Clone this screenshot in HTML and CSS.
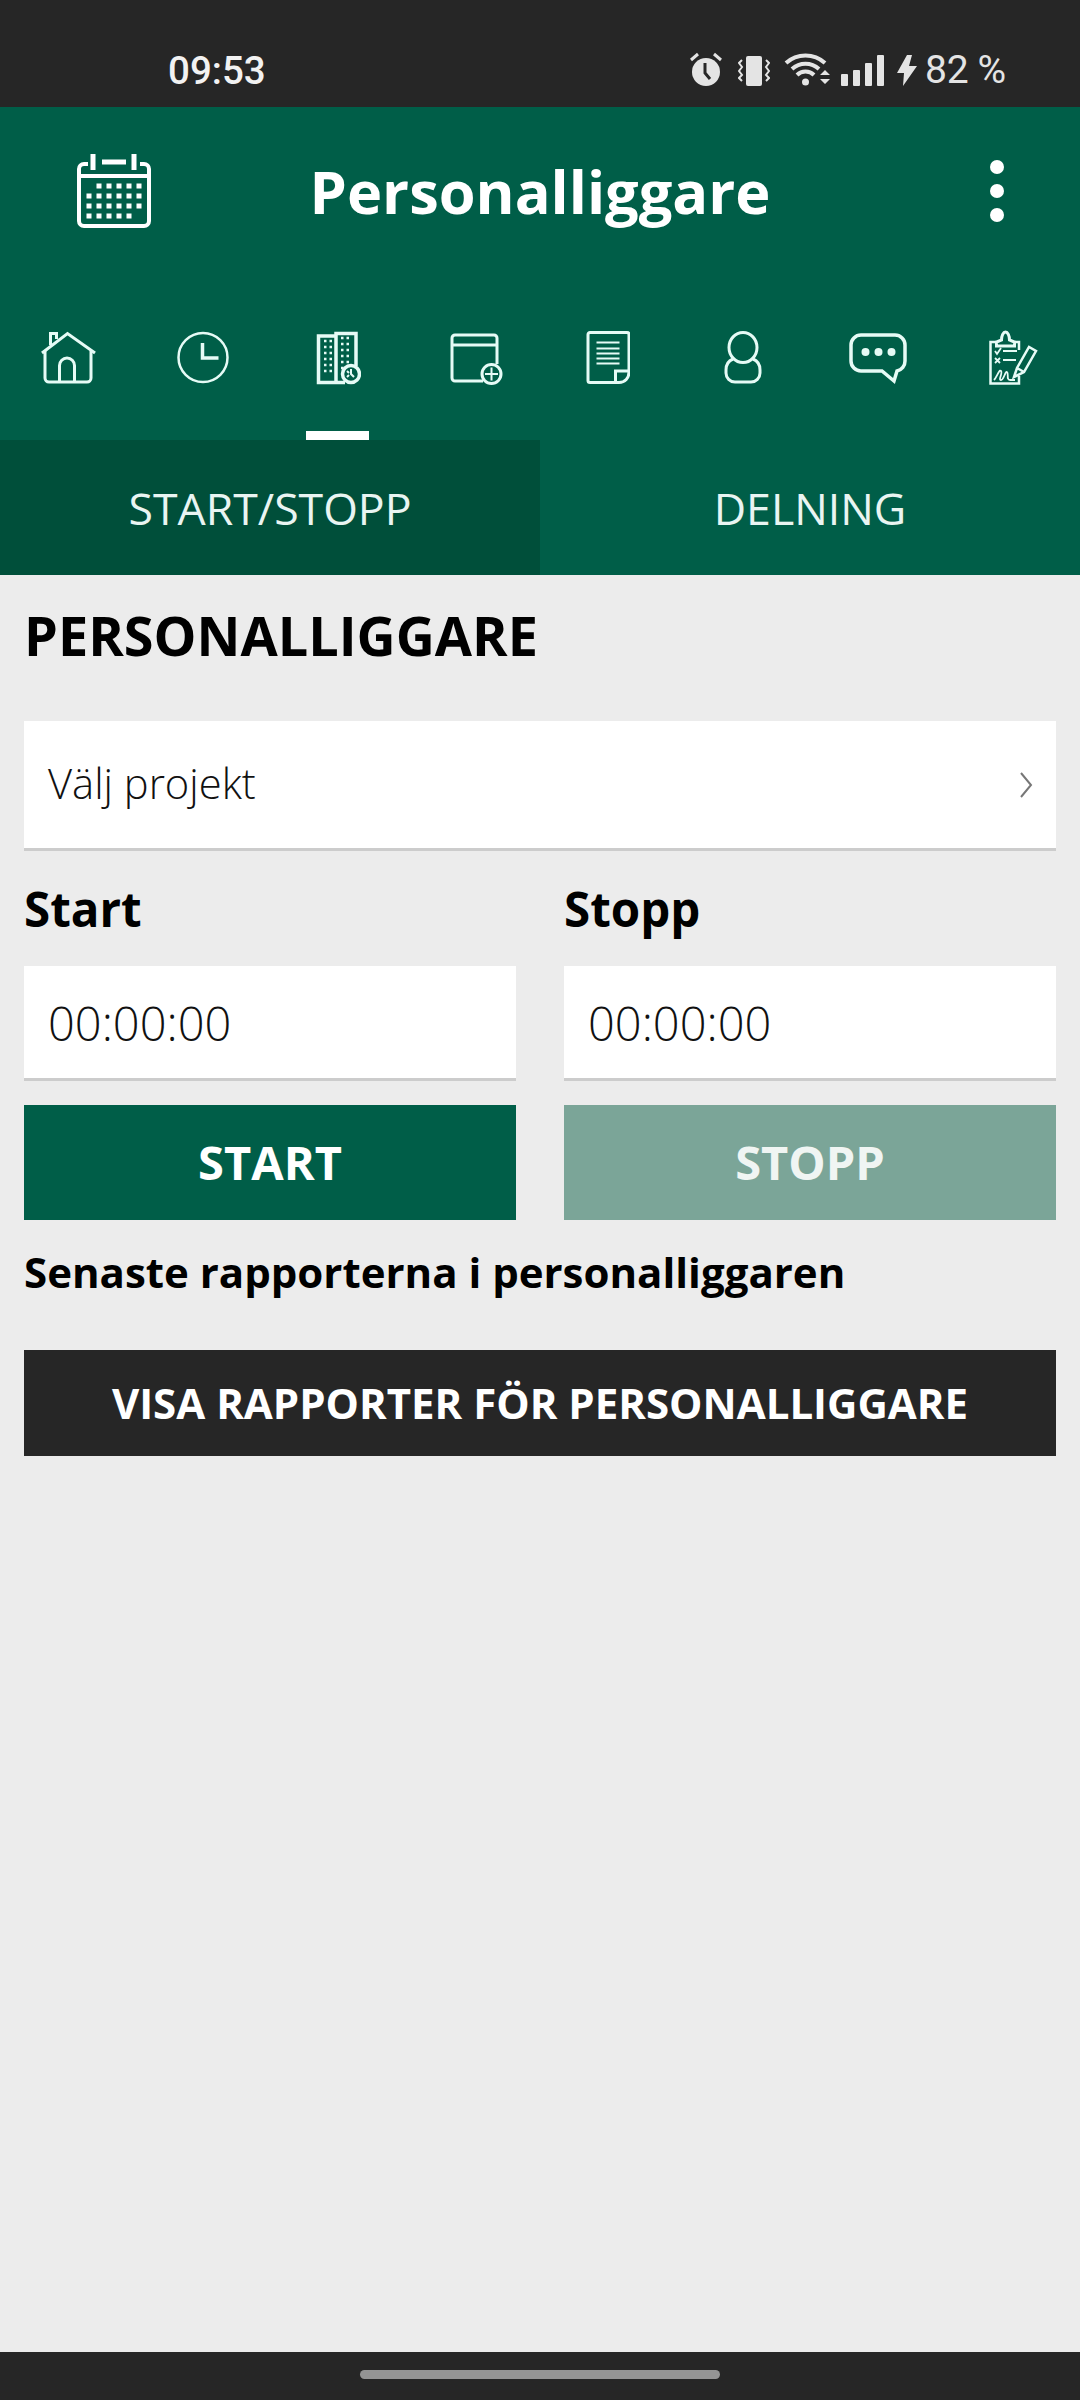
FILE: index.html
```html
<!DOCTYPE html>
<html lang="sv">
<head>
    <meta charset="UTF-8">
    <meta name="viewport" content="width=device-width, initial-scale=1.0">
    <title>Personalliggare</title>
    <link rel="stylesheet" href="styles.css">
</head>
<body>
    <div class="statusBar">
        <span class="clock">09:53</span>
        <div class="statusIcons">
            <!-- alarm -->
            <svg class="gapWide" width="32" height="34" viewBox="0 0 32 34">
                <circle cx="16" cy="20" r="14" fill="#e4e4e4"/>
                <path d="M15 11v10l5 6" fill="none" stroke="#272727" stroke-width="3"/>
                <path d="M1 8l7-6M31 8l-7-6" stroke="#e4e4e4" stroke-width="3" fill="none"/>
            </svg>
            <!-- vibrate -->
            <svg class="gapVibrate" width="32" height="30" viewBox="0 0 32 30">
                <rect x="8" y="0" width="16" height="30" rx="2" fill="#e4e4e4"/>
                <path d="M4 4l-3 3 3 4-3 4 3 4-3 3 3 3M28 4l3 3-3 4 3 4-3 4 3 3-3 3" fill="none" stroke="#e4e4e4" stroke-width="2"/>
            </svg>
            <!-- wifi -->
            <svg class="gapWifi" width="47" height="34" viewBox="0 0 47 34">
                <path d="M2 11a29 29 0 0 1 39 0M8 17a20 20 0 0 1 27 0M13 23a12 12 0 0 1 17 0" fill="none" stroke="#e4e4e4" stroke-width="4"/>
                <circle cx="21.500" cy="30" r="3.500" fill="#e4e4e4"/>
                <path d="M36 23l5-5 5 5zM36 27l5 5 5-5z" fill="#e4e4e4"/>
            </svg>
            <!-- signal -->
            <svg class="gapMid" width="43" height="31" viewBox="0 0 43 31">
                <rect x="0" y="19" width="7" height="12" rx="1" fill="#e4e4e4"/>
                <rect x="12" y="15" width="7" height="16" rx="1" fill="#e4e4e4"/>
                <rect x="24" y="8" width="7" height="23" rx="1" fill="#e4e4e4"/>
                <rect x="36" y="0" width="7" height="31" rx="1" fill="#e4e4e4"/>
            </svg>
            <!-- charging -->
            <svg class="gapNarrow" width="20" height="31" viewBox="0 0 20 31">
                <path d="M10 0L0 18h7l-1 13L20 11h-8l3-11z" fill="#e4e4e4"/>
            </svg>
            <span class="battery">82 %</span>
        </div>
    </div>

    <header class="appHeader">
        <div class="titleRow">
            <svg class="calendarIcon" width="76" height="76" viewBox="0 0 76 76">
                <path d="M12 11H8a5 5 0 0 0-5 5v52a5 5 0 0 0 5 5h60a5 5 0 0 0 5-5V16a5 5 0 0 0-5-5h-4" fill="none" stroke="#fff" stroke-width="4"/>
                <path d="M17 1v16M58 1v16M26 9h24" fill="none" stroke="#fff" stroke-width="5"/>
                <path d="M3 23h70" fill="none" stroke="#fff" stroke-width="4"/>
                <path d="M20.500 33H68M10.500 43H68M10.500 53H68M10.500 63H58" fill="none" stroke="#fff" stroke-width="5" stroke-dasharray="5 5"/>
            </svg>
            <h1 class="appTitle">Personalliggare</h1>
            <div class="menuDots"><span></span><span></span><span></span></div>
        </div>

        <nav class="iconNav">
            <a class="navItem">
                <svg width="58" height="56" viewBox="0 0 58 56" fill="none" stroke="#e6fbf6" stroke-width="3">
                    <path d="M3 23L28.500 3.500 56 23"/>
                    <path d="M6 21v27a4 4 0 0 0 4 4h38a4 4 0 0 0 4-4V21"/>
                    <path d="M20.500 52V35.500a7.500 7.500 0 0 1 15 0V52"/>
                    <path d="M11.500 15V3.500h6V9"/>
                </svg>
            </a>
            <a class="navItem">
                <svg width="54" height="56" viewBox="0 0 54 56" fill="none" stroke="#e6fbf6" stroke-width="2.500">
                    <circle cx="27" cy="27.500" r="24.500"/>
                    <path d="M26.500 13v15h16" stroke-width="3.500"/>
                </svg>
            </a>
            <a class="navItem navItemActive">
                <svg width="46" height="56" viewBox="0 0 46 56" fill="none" stroke="#e6fbf6" stroke-width="3.500">
                    <path d="M21 6H3.500v46.500H30"/>
                    <path d="M21 52V3.500h20V36"/>
                    <path d="M9 11h8M9 17h8M9 23h8M9 29h8M9 35h8M9 41h8M26 8h11M26 14h11M26 20h11M26 26h11M26 32h11M26 38h6" stroke-width="2.500" stroke-dasharray="2.500 3"/>
                    <circle cx="36" cy="44" r="8.500" fill="#005e48"/>
                    <path d="M36 39v5l3 3M32 41l2 2M32 47l2-2" stroke-width="2"/>
                </svg>
            </a>
            <a class="navItem">
                <svg width="60" height="56" viewBox="0 0 60 56" fill="none" stroke="#e6fbf6" stroke-width="3">
                    <path d="M40 51H12a3 3 0 0 1-3-3V8a3 3 0 0 1 3-3h39a3 3 0 0 1 3 3v26"/>
                    <path d="M9 15h45"/>
                    <circle cx="48.500" cy="44" r="9.500" fill="#005e48"/>
                    <path d="M48.500 37.500v13M42 44h13" stroke-width="2"/>
                </svg>
            </a>
            <a class="navItem">
                <svg width="44" height="56" viewBox="0 0 44 56" fill="none" stroke="#e6fbf6" stroke-width="3">
                    <path d="M33 52.500H4a2 2 0 0 1-2-2v-46a2 2 0 0 1 2-2h37a2 2 0 0 1 2 2V42c0 6-4 10.500-10 10.500z"/>
                    <path d="M29.500 52.500V41H43"/>
                    <path d="M10.500 12.500h23M10.500 18.500h23M10.500 23.500h23M10.500 28.500h23M10.500 33.500h23" stroke-width="2"/>
                </svg>
            </a>
            <a class="navItem">
                <svg width="40" height="56" viewBox="0 0 40 56" fill="none" stroke="#e6fbf6" stroke-width="3">
                    <ellipse cx="20" cy="17.500" rx="14" ry="15"/>
                    <path d="M10 29c-5 2-7 6-7 11v3c0 5 4 9 9 9h16c5 0 9-4 9-9v-3c0-5-2-9-7-11"/>
                </svg>
            </a>
            <a class="navItem">
                <svg width="58" height="56" viewBox="0 0 58 56" fill="none" stroke="#e6fbf6" stroke-width="3.500">
                    <path d="M33 41H12A10 10 0 0 1 2 31V15A10 10 0 0 1 12 5h34a10 10 0 0 1 10 10v16a10 10 0 0 1-8 10l-3 10z"/>
                    <circle cx="16.500" cy="22" r="4" fill="#e6fbf6" stroke="none"/>
                    <circle cx="29.500" cy="22" r="4" fill="#e6fbf6" stroke="none"/>
                    <circle cx="42.500" cy="22" r="4" fill="#e6fbf6" stroke="none"/>
                </svg>
            </a>
            <a class="navItem">
                <svg width="50" height="56" viewBox="0 0 50 56" fill="none" stroke="#e6fbf6" stroke-width="2.500">
                    <path d="M8 12H2.500v41.500H31V46M27 12h4v8"/>
                    <path d="M8.500 16v-4l5-2a4 8 0 0 1 8 0l5 2v4z" stroke-width="3"/>
                    <path d="M7 21l2 3 4-6M7 28l5 5M12 28l-5 5M15 21h14M15 30h13" stroke-width="1.800"/>
                    <path d="M6 50c3-3 5-11 7-9s-3 9 0 9 4-9 6-8-1 8 3 8h5" stroke-width="1.800"/>
                    <path d="M26 47l3-9 12-21 7 4-12 21zM29 38l7 4" stroke-width="2.500"/>
                </svg>
            </a>
        </nav>

        <div class="tabs">
            <div class="tab tabActive">START/STOPP</div>
            <div class="tab">DELNING</div>
        </div>
    </header>

    <main class="content">
        <h2 class="pageTitle">PERSONALLIGGARE</h2>

        <div class="projectSelect">
            <span class="projectName">Välj projekt</span>
            <svg width="16" height="28" viewBox="0 0 16 28" fill="none" stroke="#777" stroke-width="2">
                <path d="M3 2l10 12L3 26"/>
            </svg>
        </div>

        <div class="timeGrid">
            <div class="timeLabel">Start</div>
            <div class="timeLabel">Stopp</div>
            <div class="timeField">00:00:00</div>
            <div class="timeField">00:00:00</div>
            <button class="btn btnStart">START</button>
            <button class="btn btnStop">STOPP</button>
        </div>

        <p class="latestText">Senaste rapporterna i personalliggaren</p>

        <button class="btnReports">VISA RAPPORTER FÖR PERSONALLIGGARE</button>
    </main>

    <div class="navBar"><div class="homePill"></div></div>
</body>
</html>
```

FILE: styles.css
```css
* {
    box-sizing: border-box;
}

body {
    font-family: 'Open Sans', sans-serif;
    background-color: #ececec;
    margin: 0;
    padding: 0;
    width: 1080px;
    height: 2400px;
    display: flex;
    flex-direction: column;
    overflow: hidden;
}

.statusBar {
    height: 107px;
    background-color: #262626;
    color: #e4e4e4;
    display: flex;
    justify-content: space-between;
    align-items: flex-end;
    padding: 0 74px 21px 168px;
    font-family: 'Roboto', sans-serif;
}

.clock {
    font-size: 38.5px;
    font-weight: 500;
    line-height: 36px;
    color: #f2f2f2;
    margin-bottom: -3px;
}

.statusIcons {
    display: flex;
    align-items: flex-end;
}

.gapWide {
    margin-right: 16px;
}

.gapVibrate {
    margin-right: 14px;
}

.gapWifi {
    margin-right: 10px;
}

.gapMid {
    margin-right: 13px;
}

.gapNarrow {
    margin-right: 8px;
}

.battery {
    font-size: 39px;
    line-height: 36px;
    word-spacing: -1px;
    margin-bottom: -2px;
}

.appHeader {
    background-color: #005e48;
}

.titleRow {
    height: 158px;
    display: grid;
    grid-template-columns: 1fr auto 1fr;
    align-items: center;
    padding: 9px 76px 0;
}

.appTitle {
    margin: 0;
    color: #fff;
    font-size: 59.5px;
    font-weight: 700;
}

.menuDots {
    justify-self: end;
    display: flex;
    flex-direction: column;
    gap: 10px;
}

.menuDots span {
    display: block;
    width: 14px;
    height: 14px;
    border-radius: 50%;
    background-color: #fff;
}

.iconNav {
    height: 175px;
    display: flex;
}

.navItem {
    width: 135px;
    height: 175px;
    display: flex;
    align-items: flex-start;
    justify-content: center;
    padding-top: 65px;
    position: relative;
}

.navItemActive::after {
    content: "";
    position: absolute;
    left: 36px;
    bottom: 0;
    width: 63px;
    height: 9px;
    background-color: #fff;
}

.tabs {
    height: 135px;
    display: flex;
}

.tab {
    flex: 1;
    display: flex;
    align-items: center;
    justify-content: center;
    color: #e9f5f2;
    font-size: 44.6px;
}

.tabActive {
    background-color: #004f3a;
}

.content {
    flex: 1;
    padding: 0 24px;
}

.pageTitle {
    margin: 22px 0 0;
    height: 86px;
    line-height: 76px;
    font-size: 54px;
    font-weight: 700;
    color: #000;
}

.projectSelect {
    margin-top: 38px;
    height: 130px;
    background-color: #fff;
    border-bottom: 3px solid #cccccc;
    display: flex;
    align-items: center;
    justify-content: space-between;
    padding: 0 22px 0 24px;
    font-size: 41.7px;
    font-weight: 300;
    color: #111;
}

.projectName {
    margin-bottom: 5px;
}

.timeGrid {
    display: grid;
    grid-template-columns: 492px 492px;
    column-gap: 48px;
    margin-top: 30px;
}

.timeLabel {
    height: 85px;
    font-size: 47.5px;
    font-weight: 700;
    line-height: 56px;
    color: #000;
}

.timeField {
    height: 115px;
    background-color: #fff;
    border-bottom: 3px solid #cccccc;
    display: flex;
    align-items: center;
    padding: 2px 0 0 24px;
    font-size: 47px;
    font-weight: 300;
    color: #111;
}

.btn {
    height: 115px;
    margin-top: 24px;
    border: none;
    padding: 0 0 2px;
    font-family: inherit;
    font-size: 47px;
    font-weight: 700;
    color: #fff;
}

.btnStart {
    background-color: #005e48;
}

.btnStop {
    background-color: #7ba598;
    color: #f0f5f3;
}

.latestText {
    margin: 22px 0 0;
    height: 108px;
    font-size: 42px;
    font-weight: 700;
    line-height: 60px;
    color: #000;
}

.btnReports {
    display: block;
    width: 100%;
    height: 106px;
    border: none;
    padding: 0 0 2px;
    background-color: #262626;
    color: #fff;
    font-family: inherit;
    font-size: 42px;
    font-weight: 700;
}

.navBar {
    height: 48px;
    background-color: #262626;
    padding-top: 18px;
    display: flex;
    justify-content: center;
}

.homePill {
    width: 360px;
    height: 9px;
    border-radius: 5px;
    background-color: #949494;
}
```
